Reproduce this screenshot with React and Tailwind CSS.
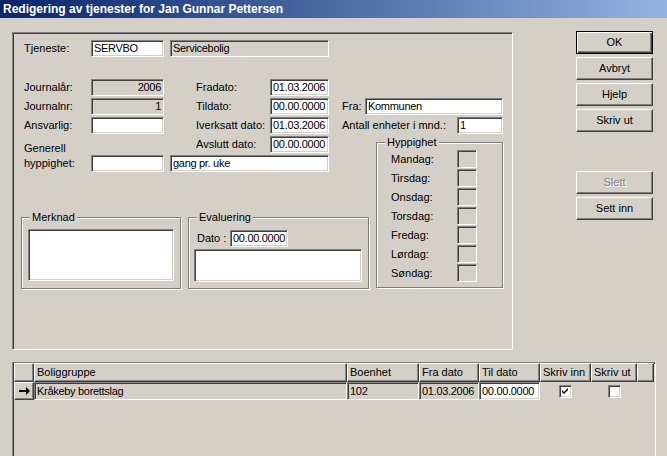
import React from 'react';

const sunken = "border border-t-[#808080] border-l-[#808080] border-b-white border-r-white shadow-[inset_1px_1px_0_#404040,inset_-1px_-1px_0_#d4d0c8]";
const raised = "border border-t-white border-l-white border-b-[#404040] border-r-[#404040] shadow-[inset_-1px_-1px_0_#808080]";
const etched = "border border-[#808080] shadow-[inset_1px_1px_0_white,1px_1px_0_white]";

const Field = ({ w, value = '', gray = false, right = false, h = 'h-[17px]' }) => (
    <div
        className={`${w} ${h} ${sunken} ${gray ? 'bg-[#d4d0c8]' : 'bg-white'} flex items-center shrink-0 px-[2px] whitespace-nowrap overflow-hidden tracking-[-0.3px] ${right ? 'justify-end' : ''}`}
    >
        {value}
    </div>
);

const Row = ({ label, lw, children }) => (
    <div className="flex items-center h-[17px]">
        <span className={`${lw} shrink-0 whitespace-nowrap`}>{label}</span>
        {children}
    </div>
);

const Group = ({ title, className, children }) => (
    <div className={`relative ${etched} ${className}`}>
        <span className="absolute -top-[7px] left-[8px] bg-[#d4d0c8] px-[2px] leading-[13px]">{title}</span>
        {children}
    </div>
);

const Button = ({ children, isDefault, disabled }) => (
    <button
        className={`h-[23px] w-full flex items-center justify-center ${
            isDefault
                ? 'border border-black shadow-[inset_1px_1px_0_white,inset_-1px_-1px_0_#404040,inset_-2px_-2px_0_#808080]'
                : raised
        } ${disabled ? 'text-[#808080] [text-shadow:1px_1px_0_white]' : 'text-black'}`}
    >
        {children}
    </button>
);

const Check = ({ checked }) => (
    <div className={`w-[13px] h-[13px] bg-white ${sunken} flex items-center justify-center`}>
        {checked && (
            <svg width="7" height="7" viewBox="0 0 7 7">
                <path d="M0 2 L2 4 L6 0 L6 2 L2 6 L0 4 Z" fill="black" />
            </svg>
        )}
    </div>
);

const days = ['Mandag:', 'Tirsdag:', 'Onsdag:', 'Torsdag:', 'Fredag:', 'Lørdag:', 'Søndag:'];

const cols = [
    { w: 'w-[20px]', title: '' },
    { w: 'w-[313px]', title: 'Boliggruppe' },
    { w: 'w-[72px]', title: 'Boenhet' },
    { w: 'w-[60px]', title: 'Fra dato' },
    { w: 'w-[61px]', title: 'Til dato' },
    { w: 'w-[51px]', title: 'Skriv inn' },
    { w: 'w-[46px]', title: 'Skriv ut' },
    { w: 'w-[17px]', title: '' },
];

export default function App() {
    return (
        <div className="w-[667px] h-[456px] overflow-hidden bg-[#d4d0c8] text-black text-[11px] leading-[13px] font-['Liberation_Sans',Arial,sans-serif]">
            {/* tittellinje */}
            <div className="h-[18px] bg-linear-to-r from-[#0a246a] to-[#94b4e0] flex items-center pl-[3px] text-white font-bold text-[12px]">
                Redigering av tjenester for Jan Gunnar Pettersen
            </div>

            <div className="flex mt-[14px]">
                {/* hovedpanel */}
                <div className="ml-[12px] w-[501px] h-[318px] shrink-0 border border-t-[#808080] border-l-[#808080] border-b-white border-r-white shadow-[inset_1px_1px_0_#404040] pl-[11px] pt-[7px]">
                    <Row label="Tjeneste:" lw="w-[67px]">
                        <Field w="w-[73px]" value="SERVBO" />
                        <div className="ml-[6px]">
                            <Field w="w-[159px]" value="Servicebolig" gray />
                        </div>
                    </Row>

                    <div className="flex mt-[22px]">
                        <div className="w-[318px] shrink-0">
                            <div className="flex">
                                <div className="w-[140px] flex flex-col gap-[2px]">
                                    <Row label="Journalår:" lw="w-[67px]">
                                        <Field w="w-[73px]" value="2006" gray right />
                                    </Row>
                                    <Row label="Journalnr:" lw="w-[67px]">
                                        <Field w="w-[73px]" value="1" gray right />
                                    </Row>
                                    <Row label="Ansvarlig:" lw="w-[67px]">
                                        <Field w="w-[73px]" />
                                    </Row>
                                    <div className="mt-[6px]">Generell</div>
                                </div>
                                <div className="ml-[32px] flex flex-col gap-[2px]">
                                    <Row label="Fradato:" lw="w-[74px]">
                                        <Field w="w-[59px]" value="01.03.2006" />
                                    </Row>
                                    <Row label="Tildato:" lw="w-[74px]">
                                        <Field w="w-[59px]" value="00.00.0000" />
                                    </Row>
                                    <Row label="Iverksatt dato:" lw="w-[74px]">
                                        <Field w="w-[59px]" value="01.03.2006" />
                                    </Row>
                                    <Row label="Avslutt dato:" lw="w-[74px]">
                                        <Field w="w-[59px]" value="00.00.0000" />
                                    </Row>
                                </div>
                            </div>
                            <Row label="hyppighet:" lw="w-[67px]">
                                <Field w="w-[73px]" />
                                <div className="ml-[6px]">
                                    <Field w="w-[159px]" value="gang pr. uke" />
                                </div>
                            </Row>

                            <div className="flex gap-[7px] mt-[45px] -ml-[3px]">
                                <Group title="Merknad" className="w-[160px] h-[72px] shrink-0 pl-[6px] pt-[11px]">
                                    <Field w="w-[146px]" h="h-[52px]" />
                                </Group>
                                <Group title="Evaluering" className="w-[181px] h-[72px] shrink-0 pl-[5px] pt-[12px]">
                                    <div className="flex items-center h-[17px] ml-[3px]">
                                        <span className="w-[33px] shrink-0">Dato :</span>
                                        <Field w="w-[58px]" value="00.00.0000" />
                                    </div>
                                    <div className="mt-[2px]">
                                        <Field w="w-[168px]" h="h-[33px]" />
                                    </div>
                                </Group>
                            </div>
                        </div>

                        <div className="flex flex-col pt-[19px]">
                            <Row label="Fra:" lw="w-[23px]">
                                <Field w="w-[138px]" value="Kommunen" />
                            </Row>
                            <div className="mt-[2px]">
                                <Row label="Antall enheter i mnd.:" lw="w-[115px]">
                                    <Field w="w-[46px]" value="1" />
                                </Row>
                            </div>
                            <Group title="Hyppighet" className="mt-[8px] ml-[34px] w-[127px] h-[146px] pl-[14px] pt-[7px] flex flex-col gap-[1px]">
                                {days.map((d) => (
                                    <div key={d} className="flex items-center h-[18px]">
                                        <span className="w-[66px] shrink-0">{d}</span>
                                        <Field w="w-[20px]" h="h-[18px]" gray />
                                    </div>
                                ))}
                            </Group>
                        </div>
                    </div>
                </div>

                {/* knapper */}
                <div className="ml-[63px] -mt-[1px] w-[77px] flex flex-col gap-[3px]">
                    <Button isDefault>OK</Button>
                    <Button>Avbryt</Button>
                    <Button>Hjelp</Button>
                    <Button>Skriv ut</Button>
                    <div className="mt-[36px] flex flex-col gap-[3px]">
                        <Button disabled>Slett</Button>
                        <Button>Sett inn</Button>
                    </div>
                </div>
            </div>

            {/* tabell */}
            <div className="ml-[12px] mt-[12px] w-[644px] h-[100px] border border-t-[#808080] border-l-[#808080] border-b-white border-r-white shadow-[inset_1px_1px_0_#404040] pl-[1px]">
                <div className="flex">
                    {cols.map((c, i) => (
                        <div key={i} className={`${c.w} h-[19px] shrink-0 ${raised} flex items-center pl-[2px] whitespace-nowrap`}>
                            {c.title}
                        </div>
                    ))}
                </div>
                <div className="flex h-[18px]">
                    <div className={`w-[20px] shrink-0 ${raised} flex items-center justify-center`}>
                        <svg width="11" height="8" viewBox="0 0 11 8">
                            <path d="M0 3 H7 V0 L11 4 L7 8 V5 H0 Z" fill="black" />
                        </svg>
                    </div>
                    <Field w="w-[313px]" h="h-[18px]" value="Kråkeby borettslag" gray />
                    <Field w="w-[72px]" h="h-[18px]" value="102" gray />
                    <Field w="w-[60px]" h="h-[18px]" value="01.03.2006" gray />
                    <Field w="w-[61px]" h="h-[18px]" value="00.00.0000" />
                    <div className="w-[51px] shrink-0 flex items-center justify-center">
                        <Check checked />
                    </div>
                    <div className="w-[46px] shrink-0 flex items-center justify-center">
                        <Check />
                    </div>
                </div>
            </div>
        </div>
    );
}
